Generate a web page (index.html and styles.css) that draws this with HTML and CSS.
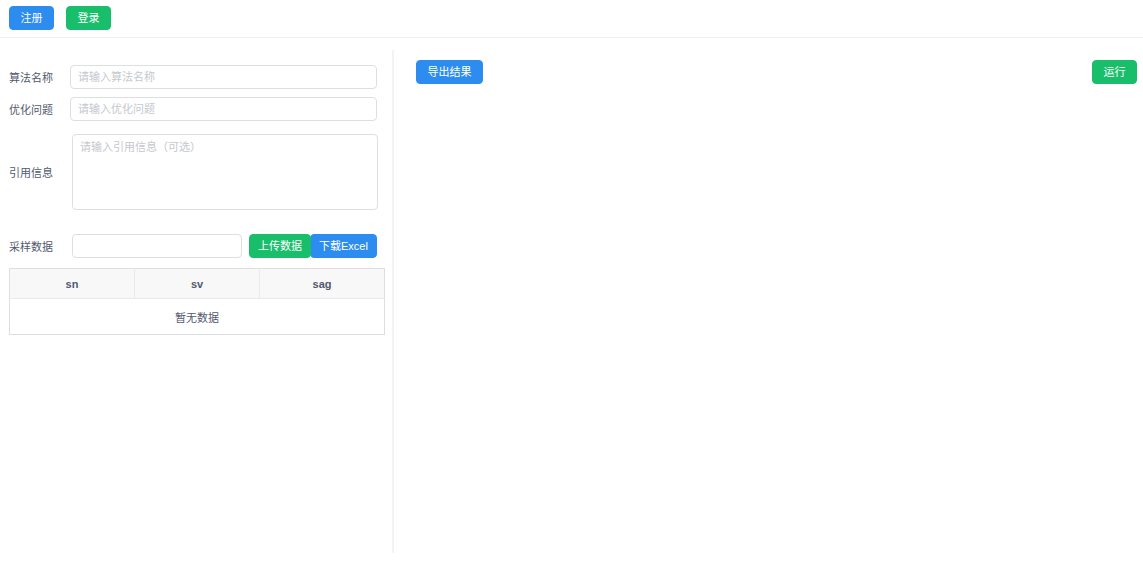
FILE: index.html
```html
<!DOCTYPE html>
<html lang="zh-CN">
<head>
    <meta charset="UTF-8">
    <meta name="viewport" content="width=device-width, initial-scale=1.0">
    <title>算法测试</title>
    <link rel="stylesheet" href="styles.css">
</head>
<body>
    <header class="topbar">
        <button class="btn btn-primary">注册</button>
        <button class="btn btn-success">登录</button>
    </header>

    <main class="workspace">
        <section class="left-pane">
            <div class="field">
                <label class="field-label">算法名称</label>
                <input class="field-input" type="text" placeholder="请输入算法名称">
            </div>
            <div class="field">
                <label class="field-label">优化问题</label>
                <input class="field-input" type="text" placeholder="请输入优化问题">
            </div>
            <div class="field field-wide field-area">
                <label class="field-label">引用信息</label>
                <textarea class="field-input field-textarea" placeholder="请输入引用信息（可选）"></textarea>
            </div>
            <div class="field field-wide field-sample">
                <label class="field-label">采样数据</label>
                <input class="field-input sample-input" type="text">
                <div class="btn-group">
                    <button class="btn btn-success btn-tight btn-front">上传数据</button>
                    <button class="btn btn-primary btn-tight btn-back">下载Excel</button>
                </div>
            </div>

            <table class="data-table">
                <thead>
                    <tr>
                        <th>sn</th>
                        <th>sv</th>
                        <th>sag</th>
                    </tr>
                </thead>
                <tbody>
                    <tr>
                        <td colspan="3" class="empty-cell">暂无数据</td>
                    </tr>
                </tbody>
            </table>
        </section>

        <section class="right-pane">
            <div class="toolbar">
                <button class="btn btn-primary">导出结果</button>
                <button class="btn btn-success">运行</button>
            </div>
        </section>
    </main>
</body>
</html>
```

FILE: styles.css
```css
body {
    margin: 0;
    font-family: 'Liberation Sans', 'Noto Sans CJK SC', sans-serif;
    font-size: 11px;
    color: #515a6e;
    background: #fff;
}
.btn {
    height: 24px;
    padding: 0 10.5px;
    border: 1px solid transparent;
    border-radius: 4px;
    font-family: inherit;
    font-size: 11px;
    line-height: 22px;
    color: #fff;
    white-space: nowrap;
    flex-shrink: 0;
    cursor: pointer;
}
.btn-primary {
    background: #2d8cf0;
    border-color: #2d8cf0;
}
.btn-success {
    background: #19be6b;
    border-color: #19be6b;
}
.btn-tight {
    padding: 0 8px;
}
.topbar {
    display: flex;
    gap: 12px;
    padding: 6px 9px 7px;
    border-bottom: 1px solid #f0f0f0;
}
.workspace {
    display: flex;
    height: 503px;
    margin-top: 12px;
}
.left-pane {
    width: 394px;
    flex-shrink: 0;
    padding: 15px 0 0 9px;
    border-right: 2px solid #f3f3f3;
    box-sizing: border-box;
}
.field {
    display: flex;
    align-items: center;
    margin: 0 15px 8px 0;
}
.field-label {
    width: 61px;
    flex-shrink: 0;
}
.field-wide .field-label {
    width: 63px;
}
.field-input {
    flex: 1;
    min-width: 0;
    height: 24px;
    padding: 0 7px;
    border: 1px solid #dcdee2;
    border-radius: 4px;
    box-sizing: border-box;
    font-family: inherit;
    font-size: 11px;
    color: #515a6e;
    outline: none;
}
.field-input::placeholder {
    color: #c5c8ce;
}
.field-area {
    margin-top: 13px;
    margin-right: 14px;
}
.field-textarea {
    height: 76px;
    padding: 4px 7px;
    line-height: 1.5;
    resize: none;
}
.field-sample {
    margin-top: 24px;
    margin-bottom: 10px;
}
.sample-input {
    flex: none;
    width: 170px;
    margin-right: 7px;
}
.btn-group {
    display: flex;
}
.btn-front {
    position: relative;
    z-index: 1;
}
.btn-back {
    margin-left: -1px;
}
.data-table {
    width: 376px;
    table-layout: fixed;
    border-collapse: collapse;
    border: 1px solid #dcdee2;
}
.data-table th {
    height: 29px;
    background: #f8f8f9;
    border-right: 1px solid #e8eaec;
    border-bottom: 1px solid #e8eaec;
    font-weight: bold;
    color: #515a6e;
    padding: 0;
}
.data-table th:last-child {
    border-right: none;
}
.empty-cell {
    height: 35px;
    text-align: center;
    padding: 0;
}
.right-pane {
    flex: 1;
    padding: 10px 6px 0 22px;
}
.toolbar {
    display: flex;
    justify-content: space-between;
}
```
